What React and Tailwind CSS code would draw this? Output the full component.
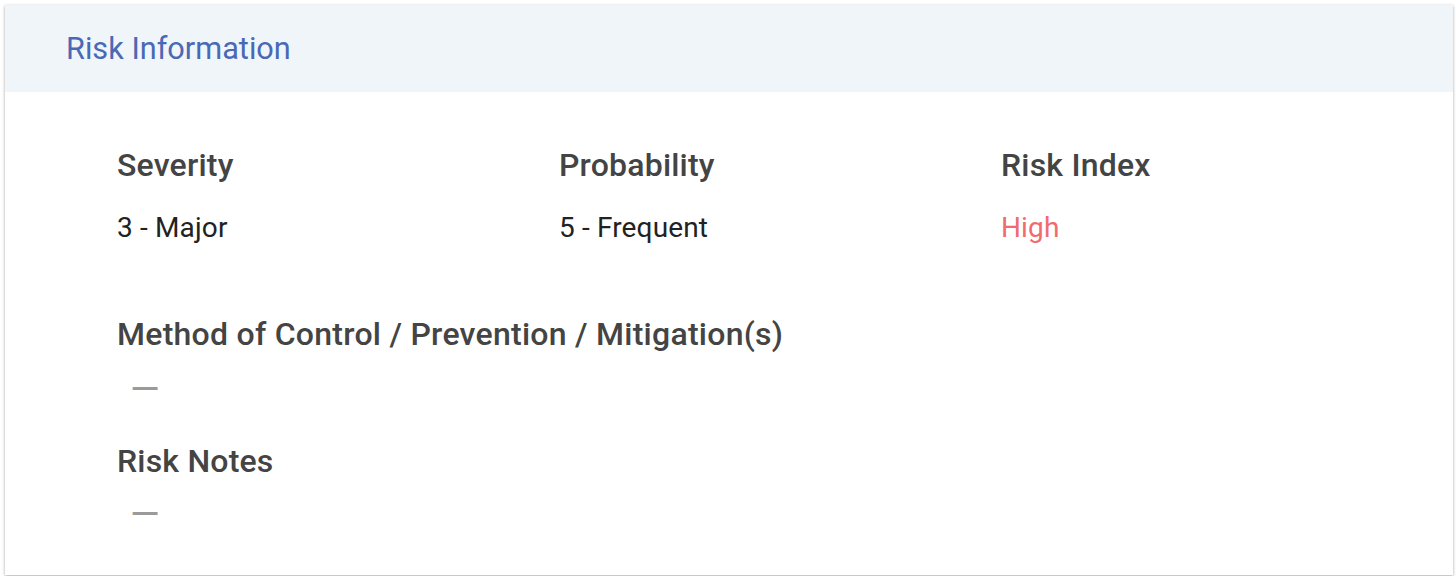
const fields = [
  { label: "Severity", value: "3 - Major" },
  { label: "Probability", value: "5 - Frequent" },
  { label: "Risk Index", value: "High", tone: "danger" },
];

function Dash() {
  return (
    <div className="mt-[2px] h-[38px] pl-[13px] text-[38px] leading-[40px] text-[#9a9a9a]">
      —
    </div>
  );
}

export default function App() {
  return (
    <div
      className="min-h-screen bg-white p-[5px] pr-[3px]"
      style={{ fontFamily: "Roboto, 'Noto Sans', sans-serif" }}
    >
      <div className="bg-white shadow-[0_1px_3px_rgba(0,0,0,0.35)]">
        <div className="flex h-[87px] items-center bg-[#f0f5fa] pl-[61px]">
          <h2 className="text-[30.7px] font-normal leading-[36px] text-[#4a69b4]">
            Risk Information
          </h2>
        </div>

        <div className="pb-[43px] pl-[112px] pt-[53px]">
          <div className="grid grid-cols-[442px_442px_1fr]">
            {fields.map((f) => (
              <div key={f.label} className="flex flex-col gap-[25px]">
                <div className="text-[32px] font-medium leading-[40px] tracking-[0.2px] text-[#444]">
                  {f.label}
                </div>
                <div
                  className={`text-[28px] leading-[36px] tracking-[0.15px] ${
                    f.tone === "danger" ? "text-[#ef6b6e]" : "text-[#222]"
                  }`}
                >
                  {f.value}
                </div>
              </div>
            ))}
          </div>

          <div className="mt-[68px] flex flex-col gap-[13px]">
            <div className="text-[32px] font-medium leading-[40px] tracking-[0.26px] text-[#444]">
              Method of Control / Prevention / Mitigation(s)
            </div>
            <Dash />
          </div>

          <div className="mt-[34px] flex flex-col gap-[11px]">
            <div className="text-[32px] font-medium leading-[40px] tracking-[0.2px] text-[#444]">
              Risk Notes
            </div>
            <Dash />
          </div>
        </div>
      </div>
    </div>
  );
}
